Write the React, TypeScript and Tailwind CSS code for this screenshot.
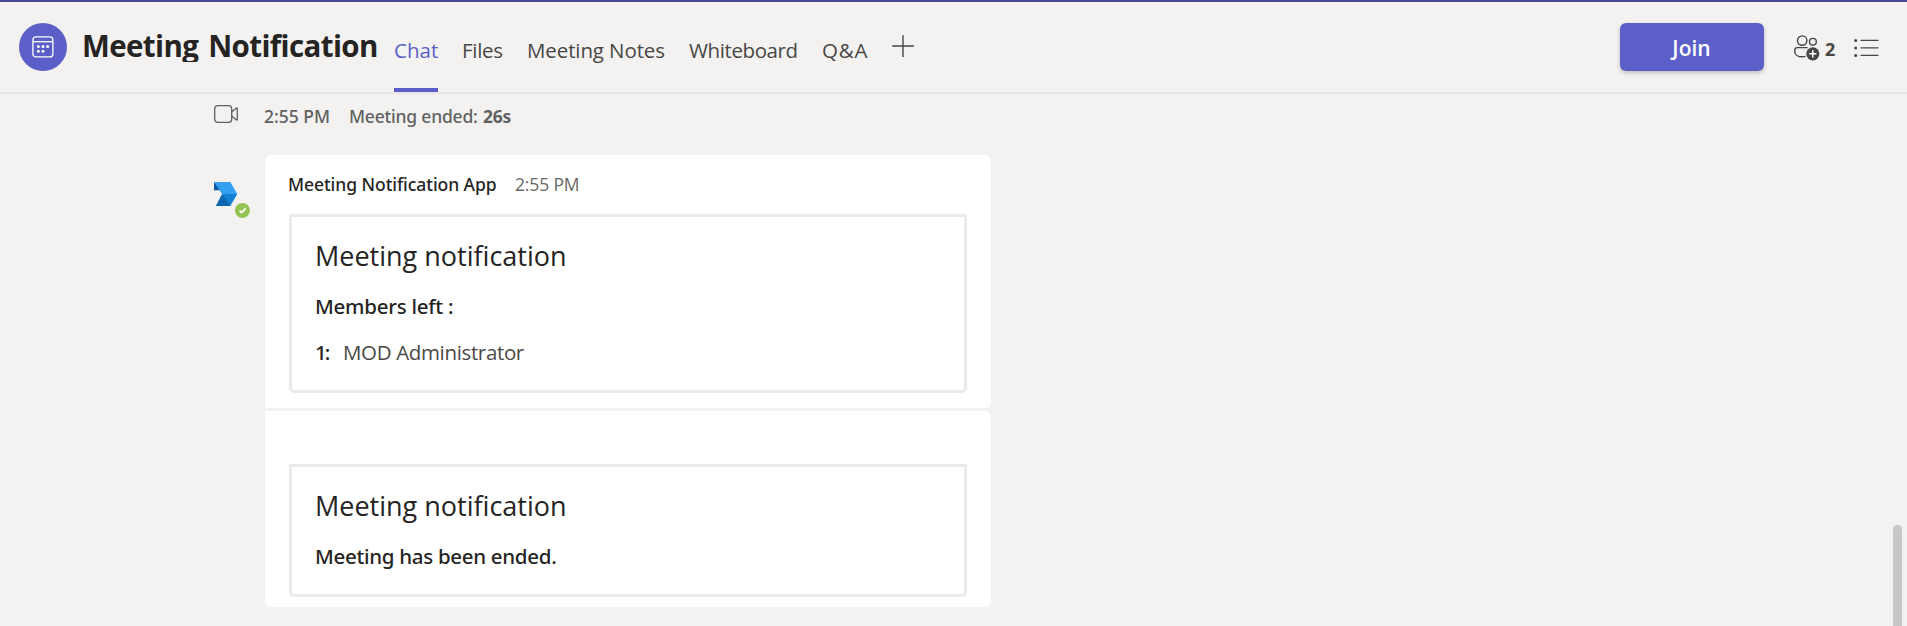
import type { ReactNode } from "react";

function CalendarIcon() {
  return (
    <svg width="22" height="22" viewBox="0 0 22 22" fill="none" stroke="#fff" strokeWidth="1.3">
      <rect x="0.9" y="0.9" width="20" height="20" rx="3" />
      <path d="M1 5.7h20" />
      <g fill="#fff" stroke="none">
        <circle cx="6.4" cy="10.6" r="1.5" />
        <circle cx="11" cy="10.6" r="1.5" />
        <circle cx="15.6" cy="10.6" r="1.5" />
        <circle cx="6.4" cy="15.2" r="1.5" />
        <circle cx="11" cy="15.2" r="1.5" />
      </g>
    </svg>
  );
}

function VideoIcon() {
  return (
    <svg width="24" height="18" viewBox="0 0 24 18" fill="none" stroke="#616161" strokeWidth="1.3" strokeLinejoin="round">
      <rect x="0.7" y="0.7" width="17" height="16.6" rx="3" />
      <path d="M17.7 7l4.8-3.9c.4-.3.8-.1.8.4v11c0 .5-.4.7-.8.4l-4.8-3.9" />
    </svg>
  );
}

function PeopleIcon() {
  return (
    <svg width="26" height="26" viewBox="0 0 26 26" fill="none" stroke="#484644" strokeWidth="1.4">
      <circle cx="8.2" cy="5.6" r="4.7" />
      <circle cx="18.9" cy="6.8" r="3.4" />
      <path d="M13.6 12.6H3.4A2.6 2.6 0 0 0 .8 15.2v1.2c0 3.4 3.2 5.4 7.4 5.4 1.2 0 2.3-.1 3.3-.4" />
      <circle cx="18.8" cy="18.8" r="6.6" fill="#484644" stroke="none" />
      <path d="M18.8 15.2v7.2M15.2 18.8h7.2" stroke="#fff" strokeWidth="1.5" />
    </svg>
  );
}

function ListIcon() {
  return (
    <svg width="25" height="20" viewBox="0 0 25 20" fill="none" stroke="#484644" strokeWidth="1.3" strokeLinecap="round">
      <path d="M7 2.4h17M7 9.8h17M7 17.3h17" />
      <g fill="#484644" stroke="none">
        <circle cx="1.7" cy="2.5" r="1.5" />
        <circle cx="1.7" cy="9.9" r="1.5" />
        <circle cx="1.7" cy="17.4" r="1.5" />
      </g>
    </svg>
  );
}

function BotAvatar() {
  return (
    <svg width="36" height="36" viewBox="0 0 36 36">
      <path d="M0 0v8.2h5.7L8.2 12 5.5 6z" fill="#0f5a9c" />
      <path d="M0 0h16.3L23.3 12H8.2z" fill="#35a0f1" />
      <path d="M8.2 12h15.1l-7 12H2z" fill="#1480d4" />
      <path d="M8.2 12l8.1 12H2z" fill="#0f66b0" />
      <circle cx="28.4" cy="28.4" r="7.5" fill="#92c353" />
      <path d="M25.5 28.6l2 2 4.1-4.1" fill="none" stroke="#fff" strokeWidth="1.8" />
    </svg>
  );
}

const tabs = [
  { label: "Files", cls: "w-[40px] ml-6 tracking-[-0.3px]" },
  { label: "Meeting Notes", cls: "w-[138px] ml-[25px] tracking-[-0.11px]" },
  { label: "Whiteboard", cls: "w-[109px] ml-6 tracking-[-0.4px]" },
  { label: "Q&A", cls: "w-[46px] ml-6 tracking-[0.75px]" },
];

function NotificationCard({ children, className }: { children: ReactNode; className: string }) {
  return (
    <div className={`rounded-b-[5px] border-[3px] border-[#ebebea] pt-[21px] pl-[23px] ${className}`}>
      <h2 className="text-[27px] leading-[36px] font-normal">Meeting notification</h2>
      {children}
    </div>
  );
}

export default function App() {
  return (
    <div className="flex h-[626px] w-full flex-col overflow-hidden bg-[#f3f2f1] font-['Open_Sans',sans-serif] text-[#252423]">
      <header className="flex h-[94px] shrink-0 items-start border-t-2 border-b-2 border-t-[#464795] border-b-[#e8e7e6] pl-[19px] text-[20.5px] leading-6 text-[#484644]">
        <div className="mt-[21px] flex size-12 items-center justify-center rounded-full bg-[#5b5fc7]">
          <CalendarIcon />
        </div>
        <h1 className="mt-[27px] ml-[15px] h-[33px] w-[298px] overflow-hidden text-[29.5px] leading-[33px] font-bold tracking-[-0.62px] whitespace-nowrap text-[#252423] [word-spacing:3px]">
          Meeting Notification
        </h1>
        <nav className="ml-[14px] flex h-[90px] pt-9 whitespace-nowrap">
          <span className="h-[54px] w-11 border-b-4 border-[#5b5fc7] text-[#5b5fc7]">Chat</span>
          {tabs.map((tab) => (
            <span key={tab.label} className={tab.cls}>{tab.label}</span>
          ))}
        </nav>
        <svg className="mt-[33px] ml-[24px]" width="22" height="22" viewBox="0 0 22 22" stroke="#484644" strokeWidth="1.4" strokeLinecap="round">
          <path d="M11 .7v21M.7 11h21" />
        </svg>
        <button className="mt-[21px] ml-auto h-12 w-36 rounded-md bg-[#5b5fc7] pt-0.5 pr-px text-[21px] font-semibold text-white shadow-[0_2px_4px_rgba(0,0,0,0.22)]">
          Join
        </button>
        <div className="mt-[33px] ml-[30px]"><PeopleIcon /></div>
        <span className="mt-[35px] ml-[5px] w-3 text-[18px] font-bold">2</span>
        <div className="mt-9 mr-[28px] ml-[17px]"><ListIcon /></div>
      </header>

      <main className="flex min-h-0 flex-1 justify-between">
        <div className="pl-[214px]">
          <div className="flex h-[61px] items-start font-['Noto_Sans','Open_Sans',sans-serif] text-[17.5px] leading-6 font-medium text-[#616161]">
            <div className="mt-[11px] mr-[26px]"><VideoIcon /></div>
            <span className="mt-[10px] w-[85px]">2:55 PM</span>
            <span className="mt-[10px] w-[134px] tracking-[-0.2px]">Meeting ended:</span>
            <span className="mt-[10px] font-bold tracking-[-0.3px]">26s</span>
          </div>
          <div className="flex">
            <div className="w-[51px] pt-[27px]"><BotAvatar /></div>
            <div className="flex w-[726px] flex-col gap-[3px]">
              <section className="h-[253px] rounded-[6px] rounded-bl-none bg-white px-6 pt-[17px]">
                <div className="-ml-px flex leading-6">
                  <span className="w-[227px] font-['Noto_Sans','Open_Sans',sans-serif] text-[17.5px] font-medium tracking-[-0.06px]">Meeting Notification App</span>
                  <span className="text-[17.5px] tracking-[-0.15px] text-[#6a6866]">2:55 PM</span>
                </div>
                <NotificationCard className="mt-[18px] h-[179px]">
                  <p className="mt-[18px] font-['Noto_Sans','Open_Sans',sans-serif] text-[20.5px] leading-7 font-medium tracking-[-0.25px]">Members left :</p>
                  <div className="mt-[18px] flex text-[20.5px] leading-7">
                    <span className="w-7 font-['Noto_Sans','Open_Sans',sans-serif] font-medium tracking-[-2px]">1:</span>
                    <span className="tracking-[-0.35px] text-[#4a4846]">MOD Administrator</span>
                  </div>
                </NotificationCard>
              </section>
              <section className="h-[196px] rounded-[6px] rounded-tl-none bg-white px-6 pt-[53px]">
                <NotificationCard className="h-[133px]">
                  <p className="mt-[18px] font-['Noto_Sans','Open_Sans',sans-serif] text-[20.5px] leading-7 font-medium tracking-[-0.3px]">Meeting has been ended.</p>
                </NotificationCard>
              </section>
            </div>
          </div>
        </div>
        <div className="mt-[431px] mr-[5px] h-[120px] w-[9px] shrink-0 rounded-full bg-[#c8c7c5]" />
      </main>
    </div>
  );
}
